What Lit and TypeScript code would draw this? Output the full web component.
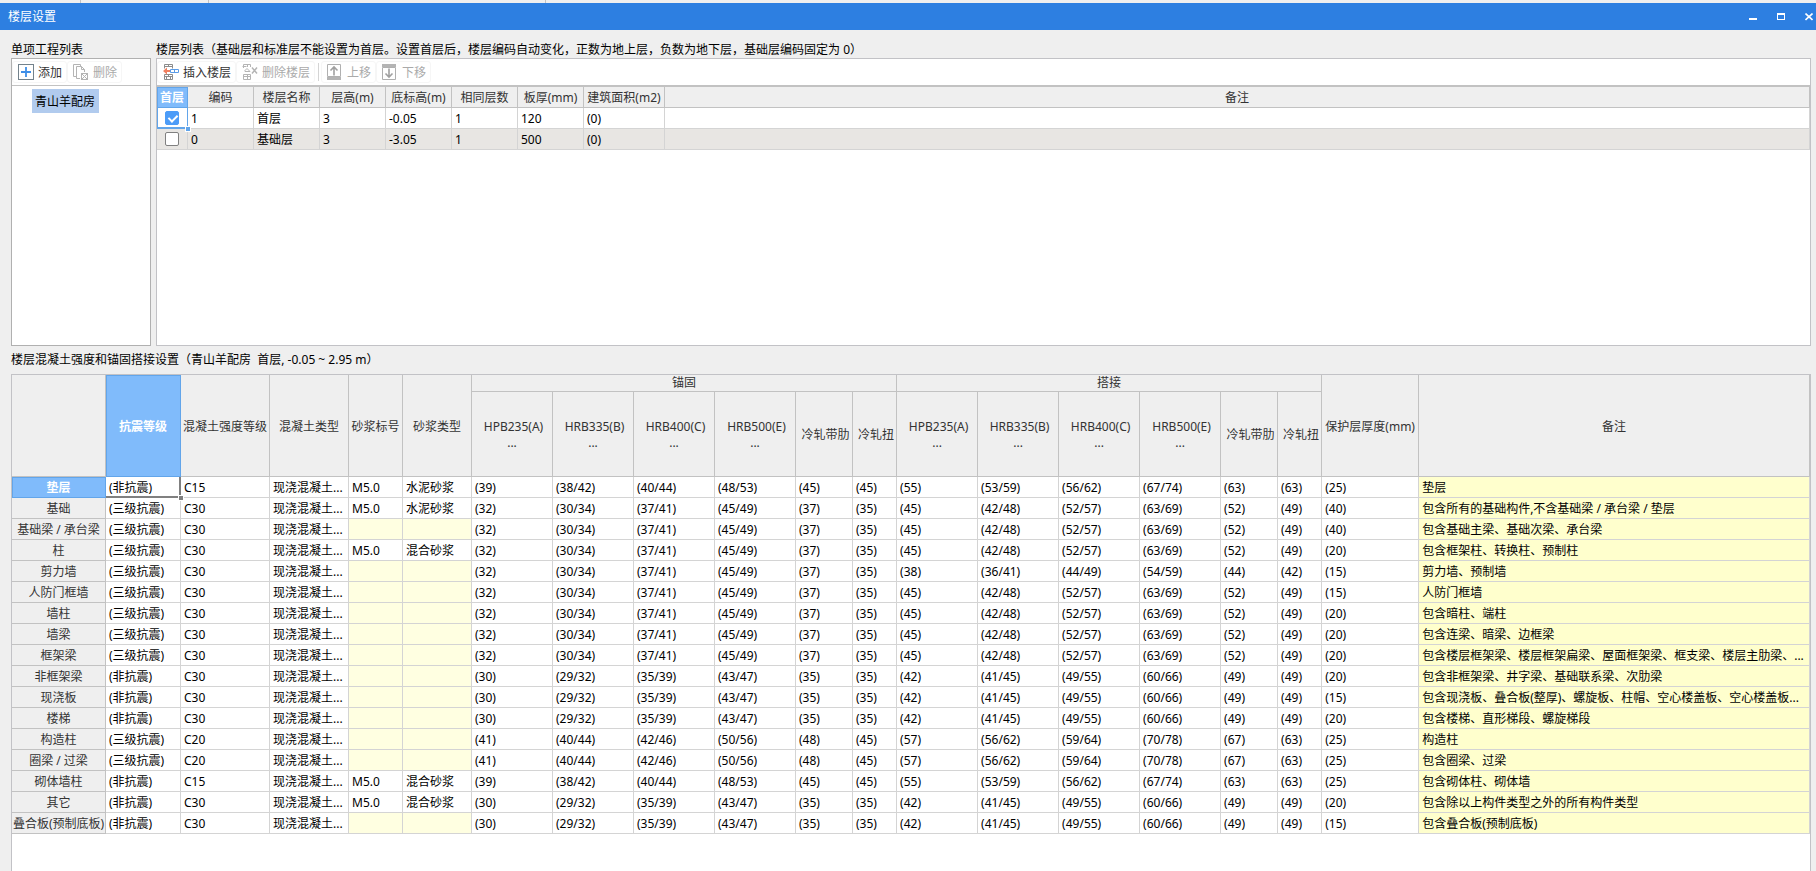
import { LitElement, html, css, svg, nothing } from "lit";
import { customElement, property, state } from "lit/decorators.js";
import { classMap } from "lit/directives/class-map.js";

interface Floor {
  first: boolean;
  code: string;
  name: string;
  height: string;
  base: string;
  same: string;
  slab: string;
  area: string;
}

const FLOORS: Floor[] = [
  { first: true, code: "1", name: "首层", height: "3", base: "-0.05", same: "1", slab: "120", area: "(0)" },
  { first: false, code: "0", name: "基础层", height: "3", base: "-3.05", same: "1", slab: "500", area: "(0)" },
];

const FLOOR_HEADS = ["首层", "编码", "楼层名称", "层高(m)", "底标高(m)", "相同层数", "板厚(mm)", "建筑面积(m2)", "备注"];
const FLOOR_COLS = [31, 66, 66, 66, 66, 66, 66, 81];

const STEEL = ["HPB235(A)", "HRB335(B)", "HRB400(C)", "HRB500(E)", "冷轧带肋", "冷轧扭"];
const STEEL_COLS = [81, 81, 81, 81, 57, 44];
const PART_COLS = [94, 75, 89, 79, 54, 69, ...STEEL_COLS, ...STEEL_COLS, 97];

const NON = "(非抗震)";
const L3 = "(三级抗震)";
const CONCRETE = "现浇混凝土...";

// Anchorage and lap lengths, in the order of the STEEL columns.
const A39 = "39 38/42 40/44 48/53 45 45";
const A32 = "32 30/34 37/41 45/49 37 35";
const A30 = "30 29/32 35/39 43/47 35 35";
const A41 = "41 40/44 42/46 50/56 48 45";
const B55 = "55 53/59 56/62 67/74 63 63";
const B45 = "45 42/48 52/57 63/69 52 49";
const B38 = "38 36/41 44/49 54/59 44 42";
const B42 = "42 41/45 49/55 60/66 49 49";
const B57 = "57 56/62 59/64 70/78 67 63";

// name, seismic grade, concrete grade, mortar grade, mortar type, anchorage, lap, cover, remark
type Part = [string, string, string, string, string, string, string, string, string];

const PARTS: Part[] = [
  ["垫层", NON, "C15", "M5.0", "水泥砂浆", A39, B55, "25", "垫层"],
  ["基础", L3, "C30", "M5.0", "水泥砂浆", A32, B45, "40", "包含所有的基础构件,不含基础梁 / 承台梁 / 垫层"],
  ["基础梁 / 承台梁", L3, "C30", "", "", A32, B45, "40", "包含基础主梁、基础次梁、承台梁"],
  ["柱", L3, "C30", "M5.0", "混合砂浆", A32, B45, "20", "包含框架柱、转换柱、预制柱"],
  ["剪力墙", L3, "C30", "", "", A32, B38, "15", "剪力墙、预制墙"],
  ["人防门框墙", L3, "C30", "", "", A32, B45, "15", "人防门框墙"],
  ["墙柱", L3, "C30", "", "", A32, B45, "20", "包含暗柱、端柱"],
  ["墙梁", L3, "C30", "", "", A32, B45, "20", "包含连梁、暗梁、边框梁"],
  ["框架梁", L3, "C30", "", "", A32, B45, "20", "包含楼层框架梁、楼层框架扁梁、屋面框架梁、框支梁、楼层主肋梁、..."],
  ["非框架梁", NON, "C30", "", "", A30, B42, "20", "包含非框架梁、井字梁、基础联系梁、次肋梁"],
  ["现浇板", NON, "C30", "", "", A30, B42, "15", "包含现浇板、叠合板(整厚)、螺旋板、柱帽、空心楼盖板、空心楼盖板..."],
  ["楼梯", NON, "C30", "", "", A30, B42, "20", "包含楼梯、直形梯段、螺旋梯段"],
  ["构造柱", L3, "C20", "", "", A41, B57, "25", "构造柱"],
  ["圈梁 / 过梁", L3, "C20", "", "", A41, B57, "25", "包含圈梁、过梁"],
  ["砌体墙柱", NON, "C15", "M5.0", "混合砂浆", A39, B55, "25", "包含砌体柱、砌体墙"],
  ["其它", NON, "C30", "M5.0", "混合砂浆", A30, B42, "20", "包含除以上构件类型之外的所有构件类型"],
  ["叠合板(预制底板)", NON, "C30", "", "", A30, B42, "15", "包含叠合板(预制底板)"],
];

const ICONS = {
  add: svg`<rect x="0.5" y="0.5" width="15" height="15" fill="#fff" stroke="#73828c"/><path d="M8 3v10M3 8h10" stroke="#3f8fe8" stroke-width="1.8" fill="none"/>`,
  remove: svg`<g fill="none" stroke="#b4b4b4"><path d="M3 12.5H.5V.5h7V2"/><path d="M7 14.5H3.5v-12h5l3 3V8M8.500 2.500v3h3"/><rect x="8.500" y="9.500" width="6" height="6"/><path d="M9 10l5 5M14 10l-5 5"/></g>`,
  insert: svg`<g fill="none" stroke="#8c8c8c"><path d="M1.500 4.500v-4h8v4M5.500 0v2.500M1.500 2.500h8"/><path d="M1.500 10.500h8v5h-8zM5.500 10v3M1.500 12.500h8M3.500 13v2M7.500 13v2"/></g><path d="M0 7l4-3.500v2.500h3v2H4v2.500z" fill="#f08060"/><path d="M7.500 5.500h8v3h-8zM11.500 5.500v3" fill="none" stroke="#5a9be6"/>`,
  drop: svg`<g fill="none" stroke="#b4b4b4"><path d="M1.500 4V.5h7V3M5.500 0v3M.5 2.500h4M2.500 7l2.500-2.500L8 7.500H3z"/><path d="M1.500 10.500h7v5h-7zM5.500 10v5M1.500 12.500h7"/><path d="M10 3.500l5 6M15 3.500l-5 6" stroke-width="1.500"/></g>`,
  up: svg`<path d="M.5 .5h13v12H.5z" fill="none" stroke="#b0b0b0"/><path d="M0 13h14v3H0z" fill="#b4b4b4"/><path d="M7 11.500V3M3.500 6.500L7 3l3.500 3.500" fill="none" stroke="#a0a0a0" stroke-width="1.600"/>`,
  down: svg`<path d="M.5 3.500h13v12H.5z" fill="none" stroke="#b0b0b0"/><path d="M0 0h14v3H0z" fill="#b4b4b4"/><path d="M7 4.500V13M3.500 9.500L7 13l3.500-3.500" fill="none" stroke="#a0a0a0" stroke-width="1.600"/>`,
};

const base = css`
  :host {
    font: 12px/16px "Noto Sans", "Noto Sans CJK SC", sans-serif;
    color: #000;
  }
  * {
    box-sizing: border-box;
  }
`;

const grid = css`
  table {
    width: 100%;
    table-layout: fixed;
    border-collapse: separate;
    border-spacing: 0;
  }
  th,
  td {
    height: 21px;
    padding: 2px 0 0 3px;
    border: solid #d4d4d4;
    border-width: 0 1px 1px 0;
    text-align: left;
    font-weight: 400;
    white-space: nowrap;
    overflow: hidden;
  }
  th {
    padding: 2px 0 0;
    text-align: center;
    color: #333;
    background: #efefef;
    border-color: #c2c2c2;
  }
  th.active {
    color: #fff;
    font-weight: 700;
    background: #80bbfb;
    border-color: #62a5ea;
    box-shadow: inset 1px 1px #62a5ea;
  }
`;

@customElement("tool-button")
export class ToolButton extends LitElement {
  @property() icon: keyof typeof ICONS = "add";
  @property() label = "";
  @property({ type: Boolean }) disabled = false;

  static styles = [
    base,
    css`
      button {
        display: flex;
        align-items: center;
        gap: 4px;
        height: 22px;
        padding: 0 4px 0 5px;
        border: 1px solid #f6f6f6;
        border-radius: 3px;
        background: #fff;
        color: #333;
        font: inherit;
        white-space: nowrap;
      }
      button:disabled {
        color: #aaa;
      }
      span {
        padding-top: 1px;
      }
      svg {
        display: block;
        flex: none;
      }
    `,
  ];

  render() {
    return html`<button type="button" ?disabled=${this.disabled}>
      <svg width="16" height="16" viewBox="0 0 16 16" aria-hidden="true">${ICONS[this.icon]}</svg>
      <span>${this.label}</span>
    </button>`;
  }
}

@customElement("floor-table")
export class FloorTable extends LitElement {
  @state() private floors = FLOORS;

  static styles = [
    base,
    grid,
    css`
      :host {
        display: block;
      }
      tbody tr:nth-child(even) td {
        background: #e8e6e3;
      }
      .check {
        padding: 0;
        text-align: center;
      }
      .check.active {
        position: relative;
        overflow: visible;
        border-color: #62a5ea;
        box-shadow: inset 1px 0 #62a5ea, inset 0 -1px #62a5ea;
      }
      .check.active::after {
        content: "";
        position: absolute;
        right: -3px;
        bottom: -3px;
        width: 4px;
        height: 4px;
        background: #62a5ea;
        outline: 1px solid #fff;
      }
      input {
        appearance: none;
        position: relative;
        display: block;
        width: 14px;
        height: 14px;
        margin: 0 auto;
        border: 1px solid #808080;
        border-radius: 2px;
        background: #fff;
      }
      input:checked {
        border-color: #4c9cf8;
        background: #4c9cf8;
      }
      input:checked::after {
        content: "";
        position: absolute;
        left: 4px;
        top: 1px;
        width: 4px;
        height: 7px;
        border: solid #fff;
        border-width: 0 2px 2px 0;
        transform: rotate(45deg);
      }
    `,
  ];

  private pick(index: number) {
    this.floors = this.floors.map((f, i) => ({ ...f, first: i === index }));
  }

  render() {
    return html`<table>
      <colgroup>
        ${FLOOR_COLS.map((w) => html`<col style="width:${w}px" />`)}
        <col />
      </colgroup>
      <thead>
        <tr>
          ${FLOOR_HEADS.map((h, i) => html`<th scope="col" class=${classMap({ active: i === 0 })}>${h}</th>`)}
        </tr>
      </thead>
      <tbody>
        ${this.floors.map(
          (f, i) => html`<tr>
            <td class=${classMap({ check: true, active: i === 0 })}>
              <input type="checkbox" aria-label=${f.name} .checked=${f.first} @change=${() => this.pick(i)} />
            </td>
            <td>${f.code}</td>
            <td>${f.name}</td>
            <td>${f.height}</td>
            <td>${f.base}</td>
            <td>${f.same}</td>
            <td>${f.slab}</td>
            <td>${f.area}</td>
            <td></td>
          </tr>`
        )}
      </tbody>
    </table>`;
  }
}

@customElement("strength-table")
export class StrengthTable extends LitElement {
  static styles = [
    base,
    grid,
    css`
      :host {
        display: block;
      }
      .group th {
        height: 17px;
      }
      .group th[colspan] {
        padding: 0;
      }
      .steel th {
        height: 85px;
      }
      .lead {
        padding-left: 3px;
      }
      .more {
        display: block;
      }
      .blank {
        background: #ffffe1;
      }
      .remark {
        background: #ffffcd;
      }
      .current {
        position: relative;
        overflow: visible;
        border-color: #808080;
        box-shadow: inset -1px -1px #808080;
      }
      .current::after {
        content: "";
        position: absolute;
        right: -3px;
        bottom: -3px;
        width: 4px;
        height: 4px;
        background: #808080;
        outline: 1px solid #fff;
      }
    `,
  ];

  private steelHeads() {
    return STEEL.map(
      (s, i) => html`<th scope="col"><span class="lead">${s}</span>${i < 4 ? html`<span class="more">...</span>` : nothing}</th>`
    );
  }

  private lengths(values: string) {
    return values.split(" ").map((v) => html`<td>(${v})</td>`);
  }

  render() {
    return html`<table>
      <colgroup>
        ${PART_COLS.map((w) => html`<col style="width:${w}px" />`)}
        <col />
      </colgroup>
      <thead>
        <tr class="group">
          <th rowspan="2"></th>
          <th rowspan="2" scope="col" class="active">抗震等级</th>
          <th rowspan="2" scope="col">混凝土强度等级</th>
          <th rowspan="2" scope="col">混凝土类型</th>
          <th rowspan="2" scope="col">砂浆标号</th>
          <th rowspan="2" scope="col">砂浆类型</th>
          <th colspan="6" scope="colgroup">锚固</th>
          <th colspan="6" scope="colgroup">搭接</th>
          <th rowspan="2" scope="col">保护层厚度(mm)</th>
          <th rowspan="2" scope="col">备注</th>
        </tr>
        <tr class="steel">
          ${this.steelHeads()}${this.steelHeads()}
        </tr>
      </thead>
      <tbody>
        ${PARTS.map(
          ([name, seismic, grade, mortar, mortarType, anchor, lap, cover, remark], i) => html`<tr>
            <th scope="row" class=${classMap({ active: i === 0 })}>${name}</th>
            <td class=${classMap({ current: i === 0 })}>${seismic}</td>
            <td>${grade}</td>
            <td>${CONCRETE}</td>
            <td class=${classMap({ blank: !mortar })}>${mortar}</td>
            <td class=${classMap({ blank: !mortarType })}>${mortarType}</td>
            ${this.lengths(anchor)}${this.lengths(lap)}
            <td>(${cover})</td>
            <td class="remark">${remark}</td>
          </tr>`
        )}
      </tbody>
    </table>`;
  }
}

@customElement("app-root")
export class AppRoot extends LitElement {
  static styles = [
    base,
    css`
      :host {
        display: flex;
        flex-direction: column;
        min-height: 100vh;
        background: #efefef;
      }
      .behind {
        display: flex;
        height: 3px;
      }
      .behind i {
        border-right: 1px solid #c2c2c2;
      }
      .tab-a {
        width: 81px;
      }
      .tab-b {
        width: 128px;
      }
      .tab-c {
        width: 337px;
      }
      .title {
        display: flex;
        justify-content: space-between;
        align-items: center;
        height: 27px;
        padding-left: 8px;
        background: #2d7fe1;
        color: #fff;
      }
      h1,
      h2 {
        margin: 0;
        font: inherit;
      }
      .controls {
        display: flex;
      }
      .controls button {
        display: grid;
        place-items: center;
        width: 28px;
        height: 27px;
        padding: 0;
        border: 0;
        background: none;
      }
      .controls button:last-child {
        width: 14px;
        margin-left: 7px;
      }
      main {
        flex: 1;
        display: flex;
        flex-direction: column;
        padding: 12px 5px 0 11px;
      }
      .top {
        display: grid;
        grid-template-columns: 140px 1fr;
        grid-template-rows: 16px 288px;
        column-gap: 5px;
      }
      h2 {
        white-space: nowrap;
      }
      .panel {
        display: flex;
        flex-direction: column;
        min-width: 0;
        border: 1px solid #c2c2c6;
        background: #fff;
      }
      .tools {
        display: flex;
        align-items: center;
        height: 27px;
        border-bottom: 1px solid #c2c2c2;
      }
      .floors .tools {
        height: 28px;
        border-bottom-width: 2px;
      }
      .sep {
        width: 1px;
        height: 18px;
        margin: 0 2px 0 3px;
        background: #d4d4d4;
      }
      ul {
        margin: 0;
        padding: 3px 0 0 20px;
        list-style: none;
      }
      li {
        width: max-content;
        padding: 5px 4px 3px 3px;
        background: #b1cbee;
      }
      .projects {
        border-color: #b0b0b0;
      }
      .caption {
        padding: 6px 0;
      }
      .strength {
        flex: 1;
        border-bottom: 0;
      }
    `,
  ];

  render() {
    return html`
      <div class="behind"><i class="tab-a"></i><i class="tab-b"></i><i class="tab-c"></i></div>
      <header class="title">
        <h1>楼层设置</h1>
        <div class="controls">
          <button type="button" aria-label="最小化">
            <svg width="8" height="8" viewBox="0 0 8 8"><path d="M0 5h8v2H0z" fill="#fff" /></svg>
          </button>
          <button type="button" aria-label="最大化">
            <svg width="8" height="8" viewBox="0 0 8 8"><path d="M0 0h8v7H0zM1 2v4h6V2z" fill="#fff" fill-rule="evenodd" /></svg>
          </button>
          <button type="button" aria-label="关闭">
            <svg width="8" height="8" viewBox="0 0 8 8"><path d="M.5 .5l7 6.500M7.500 .5l-7 6.500" stroke="#fff" stroke-width="1.600" /></svg>
          </button>
        </div>
      </header>
      <main>
        <div class="top">
          <h2>单项工程列表</h2>
          <h2>楼层列表（基础层和标准层不能设置为首层。设置首层后，楼层编码自动变化，正数为地上层，负数为地下层，基础层编码固定为 0）</h2>
          <section class="panel projects">
            <div class="tools">
              <tool-button icon="add" label="添加"></tool-button>
              <tool-button icon="remove" label="删除" disabled></tool-button>
            </div>
            <ul>
              <li>青山羊配房</li>
            </ul>
          </section>
          <section class="panel floors">
            <div class="tools">
              <tool-button icon="insert" label="插入楼层"></tool-button>
              <tool-button icon="drop" label="删除楼层" disabled></tool-button>
              <span class="sep"></span>
              <tool-button icon="up" label="上移" disabled></tool-button>
              <tool-button icon="down" label="下移" disabled></tool-button>
            </div>
            <floor-table></floor-table>
          </section>
        </div>
        <h2 class="caption">楼层混凝土强度和锚固搭接设置（青山羊配房&nbsp; 首层, -0.05 ~ 2.95 m）</h2>
        <section class="panel strength">
          <strength-table></strength-table>
        </section>
      </main>
    `;
  }
}
